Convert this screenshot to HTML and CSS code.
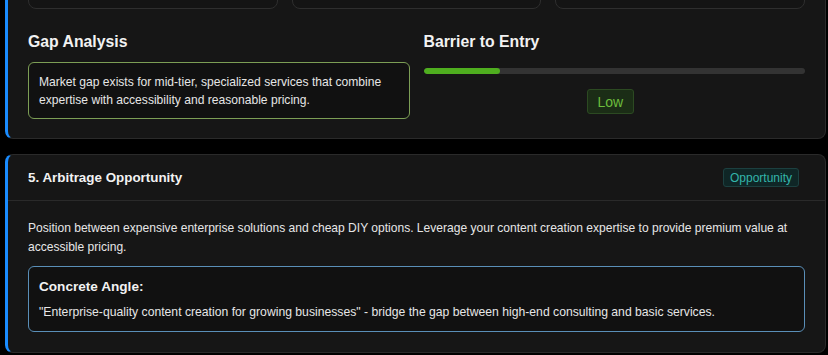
FILE: index.html
```html
<!DOCTYPE html>
<html lang="en">
<head>
<meta charset="utf-8">
<title>Analysis</title>
<link rel="stylesheet" href="styles.css">
</head>
<body>
<main class="page">
  <section class="card card--first">
    <div class="stat-grid">
      <div class="stat-box"></div>
      <div class="stat-box"></div>
      <div class="stat-box"></div>
    </div>
    <div class="split">
      <div class="split-col">
        <h3 class="section-title">Gap Analysis</h3>
        <div class="gap-box">Market gap exists for mid-tier, specialized services that combine expertise with accessibility and reasonable pricing.</div>
      </div>
      <div class="split-col">
        <h3 class="section-title">Barrier to Entry</h3>
        <div class="meter"><div class="meter-fill" style="width: 20%"></div></div>
        <div class="meter-label-row"><span class="level-badge">Low</span></div>
      </div>
    </div>
  </section>

  <section class="card">
    <header class="card-header">
      <h2 class="card-title">5. Arbitrage Opportunity</h2>
      <span class="tag">Opportunity</span>
    </header>
    <div class="card-body">
      <p class="desc">Position between expensive enterprise solutions and cheap DIY options. Leverage your content creation expertise to provide premium value at accessible pricing.</p>
      <div class="angle-box">
        <h4 class="angle-title">Concrete Angle:</h4>
        <p class="angle-text">"Enterprise-quality content creation for growing businesses" - bridge the gap between high-end consulting and basic services.</p>
      </div>
    </div>
  </section>
</main>
</body>
</html>
```

FILE: styles.css
```css
* { box-sizing: border-box; }

html, body {
  margin: 0;
  padding: 0;
  background: #000;
}

body {
  font-family: "Liberation Sans", Arial, sans-serif;
  color: #e4e4e4;
  overflow: hidden;
}

.page {
  display: flex;
  flex-direction: column;
  gap: 15px;
  padding: 0 2px 0 5px;
}

.card {
  background: #161616;
  border: 1px solid #2a2a2a;
  border-left: 3px solid #1a8cff;
  border-radius: 8px;
}

.card--first {
  margin-top: -92px;
  padding: 20px 20px 19px 20px;
}

.stat-grid {
  display: grid;
  grid-template-columns: repeat(3, 1fr);
  gap: 14px;
}

.stat-box {
  height: 80px;
  background: #141414;
  border: 1px solid #2e2e2e;
  border-radius: 8px;
}

.split {
  display: grid;
  grid-template-columns: 1fr 1fr;
  gap: 14px;
  margin-top: 22px;
}

.section-title {
  margin: 0 0 9px;
  font-size: 15.8px;
  line-height: 22px;
  font-weight: 700;
  color: #f2f2f2;
}

.gap-box {
  background: #111;
  border: 1px solid #7c9e55;
  border-radius: 6px;
  padding: 10px 10px 9px;
  font-size: 12.1px;
  line-height: 18.2px;
  color: #e6e6e6;
}

.meter {
  margin-top: 15px;
  height: 6px;
  background: #333;
  border-radius: 3px;
  overflow: hidden;
}

.meter-fill {
  height: 100%;
  background: #4fae1f;
  border-radius: 3px;
}

.meter-label-row {
  display: flex;
  justify-content: center;
  margin-top: 15px;
  padding-right: 8px;
}

.level-badge {
  display: inline-flex;
  align-items: center;
  justify-content: center;
  width: 47px;
  height: 25px;
  background: #1b2d16;
  border: 1px solid #2c4a22;
  border-radius: 3px;
  color: #6cbd3c;
  font-size: 14px;
}

.card-header {
  display: flex;
  align-items: center;
  justify-content: space-between;
  height: 46px;
  padding: 0 26px 0 20px;
  border-bottom: 1px solid #2a2a2a;
}

.card-title {
  margin: 0;
  font-size: 13.4px;
  font-weight: 700;
  color: #f2f2f2;
}

.tag {
  display: inline-flex;
  align-items: center;
  height: 19px;
  padding: 0 6px;
  background: #0f2626;
  border: 1px solid #1c4040;
  border-radius: 3px;
  color: #33b5aa;
  font-size: 12px;
}

.card-body {
  padding: 18px 20px 20px;
}

.desc {
  margin: 0 0 10px;
  font-size: 12.05px;
  line-height: 18.2px;
  color: #e6e6e6;
}

.angle-box {
  background: #111;
  border: 1px solid #5a8fb8;
  border-radius: 6px;
  padding: 10px;
}

.angle-title {
  margin: 0 0 6px;
  font-size: 13.6px;
  line-height: 20px;
  font-weight: 700;
  color: #f2f2f2;
}

.angle-text {
  margin: 0;
  font-size: 12.2px;
  line-height: 18px;
  color: #e6e6e6;
}
```
